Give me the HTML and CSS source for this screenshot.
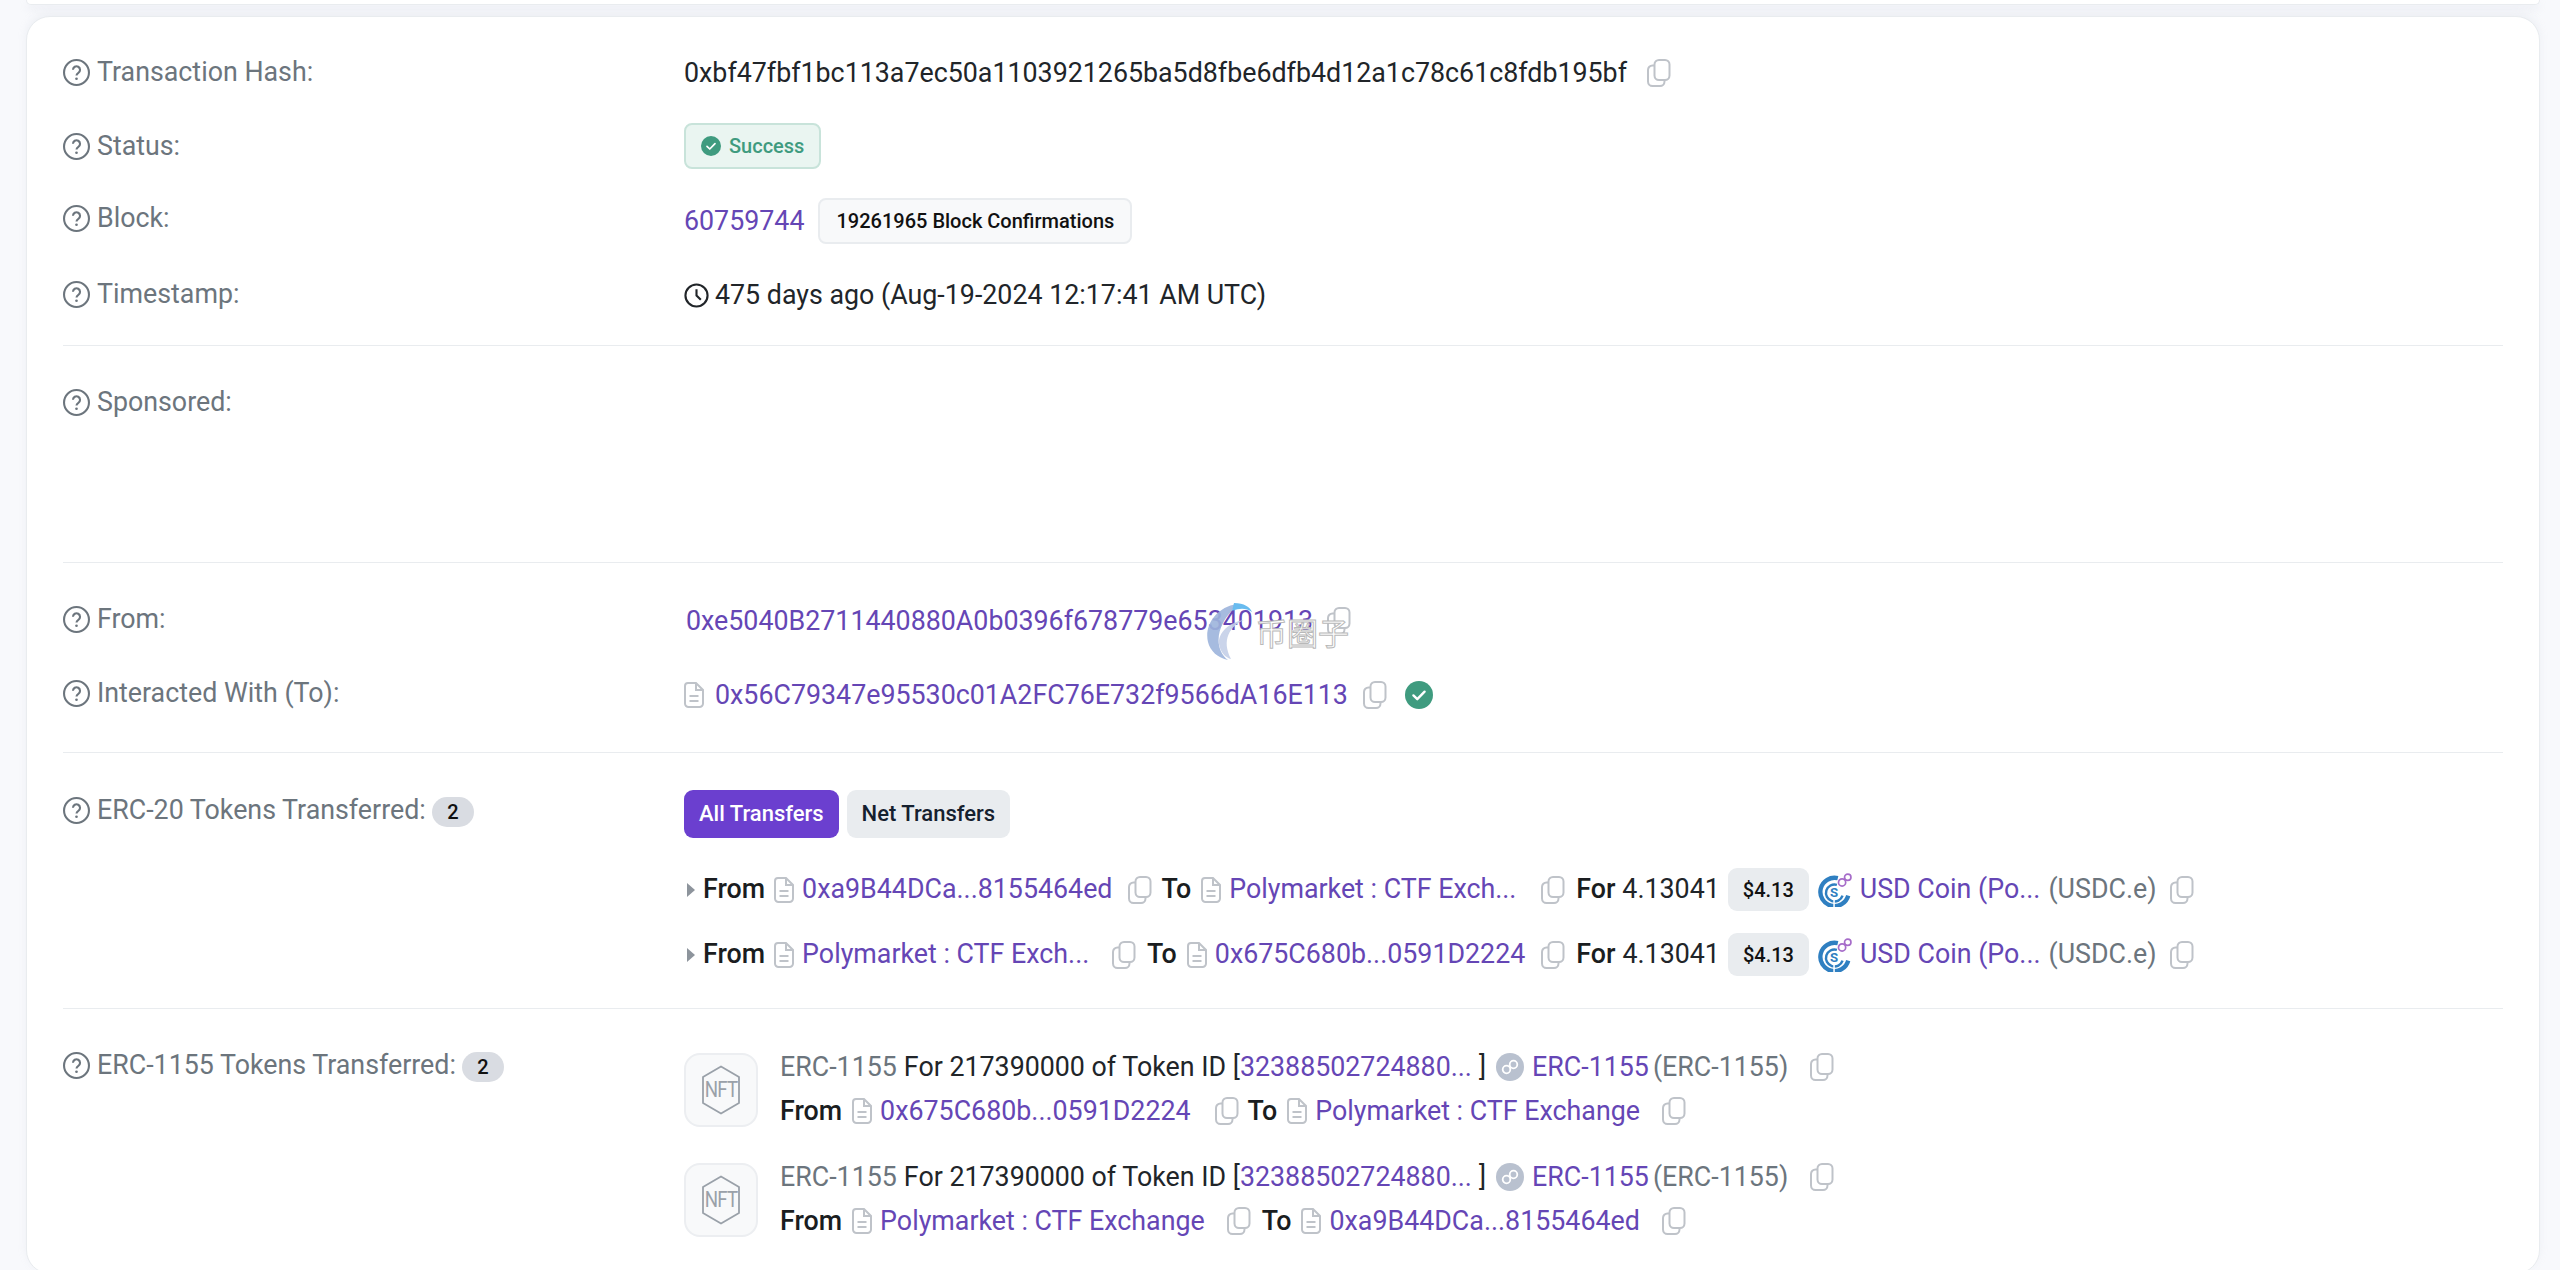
FILE: index.html
```html
<!DOCTYPE html>
<html lang="en">
<head>
  <meta charset="utf-8">
  <title>Transaction Details</title>
  <link rel="stylesheet" href="styles.css">
</head>
<body>
  <svg class="sprite" width="0" height="0">
    <symbol id="help" viewBox="0 0 26 26"><circle cx="13" cy="13" r="12" fill="none" stroke="currentColor" stroke-width="2"/><path d="M9.600 10.400a3.400 3.400 0 1 1 5.200 2.900c-1.100.7-1.800 1.300-1.800 2.600" fill="none" stroke="currentColor" stroke-width="2"/><circle cx="13" cy="19" r="1.300" fill="currentColor"/></symbol>
    <symbol id="copy" viewBox="0 0 24 28"><rect x="7.500" y="1" width="15" height="20" rx="4.500" fill="#fff" stroke="currentColor" stroke-width="2"/><path d="M7 6.500H5.500A4.500 4.500 0 0 0 1 11v11.500A4.500 4.500 0 0 0 5.500 27H13a4.500 4.500 0 0 0 4.500-4.500V21" fill="none" stroke="currentColor" stroke-width="2"/></symbol>
    <symbol id="file" viewBox="0 0 20 26"><path d="M4 1h8l7 7v13.500A3.500 3.500 0 0 1 15.500 25h-11A3.500 3.500 0 0 1 1 21.500V4a3 3 0 0 1 3-3z" fill="none" stroke="currentColor" stroke-width="2"/><path d="M12 1v7h7M5.500 14h9M5.500 19h9" fill="none" stroke="currentColor" stroke-width="2"/></symbol>
    <symbol id="check" viewBox="0 0 26 26"><circle cx="13" cy="13" r="13" fill="#3f9b7f"/><path d="M7.800 13.400l3.600 3.500 6.800-7" fill="none" stroke="#fff" stroke-width="2.200" stroke-linecap="round" stroke-linejoin="round"/></symbol>
    <symbol id="clock" viewBox="0 0 26 26"><circle cx="13" cy="13" r="11.500" fill="none" stroke="currentColor" stroke-width="2.200"/><path d="M13 6.500V13l4.500 4.500" fill="none" stroke="currentColor" stroke-width="2.200"/></symbol>
    <symbol id="usdc" viewBox="0 0 36 36">
      <path d="M21 5.500A15 15 0 1 0 32 24" fill="none" stroke="#2f7fc1" stroke-width="4.600"/>
      <path d="M20 12.500a9 9 0 1 0 6 11.500" fill="none" stroke="#2f7fc1" stroke-width="2.600"/>
      <text x="17" y="25" text-anchor="middle" font-family="Roboto, sans-serif" font-size="14" font-weight="700" fill="#2f7fc1">S</text>
      <path d="M17 36v-8" stroke="#fff" stroke-width="1.600"/>
      <circle cx="25.500" cy="10" r="3.800" fill="none" stroke="#a66cc9" stroke-width="1.800"/>
      <circle cx="31.500" cy="4.500" r="3.400" fill="none" stroke="#a66cc9" stroke-width="1.800"/>
    </symbol>
    <symbol id="chain" viewBox="0 0 28 28"><circle cx="14" cy="14" r="14" fill="#b9c1cf"/><circle cx="10.500" cy="16.500" r="3.800" fill="none" stroke="#fff" stroke-width="1.800"/><circle cx="17.500" cy="11.500" r="3.800" fill="none" stroke="#fff" stroke-width="1.800"/></symbol>
    <symbol id="nft" viewBox="0 0 40 50"><path d="M20 1.500L38 12v26L20 48.500 2 38V12z" fill="none" stroke="currentColor" stroke-width="1.800" stroke-linejoin="round"/></symbol>
  </svg>

  <div class="top-card"></div>

  <main class="card">
    <section class="block block-overview">
      <div class="row">
        <div class="label"><svg class="ico-help"><use href="#help"/></svg>Transaction Hash:</div>
        <div class="value">0xbf47fbf1bc113a7ec50a1103921265ba5d8fbe6dfb4d12a1c78c61c8fdb195bf<svg class="ico-copy copy-hash"><use href="#copy"/></svg></div>
      </div>
      <div class="row">
        <div class="label"><svg class="ico-help"><use href="#help"/></svg>Status:</div>
        <div class="value"><span class="status"><svg class="ico-status"><use href="#check"/></svg>Success</span></div>
      </div>
      <div class="row">
        <div class="label label-block"><svg class="ico-help"><use href="#help"/></svg>Block:</div>
        <div class="value"><a class="link">60759744</a><span class="confirm">19261965 Block Confirmations</span></div>
      </div>
      <div class="row">
        <div class="label"><svg class="ico-help"><use href="#help"/></svg>Timestamp:</div>
        <div class="value"><svg class="ico-clock"><use href="#clock"/></svg>475 days ago (Aug-19-2024 12:17:41 AM UTC)</div>
      </div>
    </section>

    <section class="block block-sponsored">
      <div class="label"><svg class="ico-help"><use href="#help"/></svg>Sponsored:</div>
    </section>

    <section class="block block-parties">
      <div class="row">
        <div class="label"><svg class="ico-help"><use href="#help"/></svg>From:</div>
        <div class="value value-from"><a class="link">0xe5040B2711440880A0b0396f678779e653401913</a><svg class="ico-copy copy-from"><use href="#copy"/></svg></div>
      </div>
      <div class="row">
        <div class="label"><svg class="ico-help"><use href="#help"/></svg>Interacted With (To):</div>
        <div class="value"><svg class="ico-file file-to"><use href="#file"/></svg><a class="link">0x56C79347e95530c01A2FC76E732f9566dA16E113</a><svg class="ico-copy copy-to"><use href="#copy"/></svg><svg class="ico-verified"><use href="#check"/></svg></div>
      </div>
      <div class="watermark">
        <svg class="watermark-logo" viewBox="0 0 50 60"><path d="M33 2C12 5 0 24 4 40c2 9 10 16 20 18C13 50 12 34 19 21 23 13 30 7 33 2z" fill="#9db4dc"/><path d="M30 1c10 0 16 4 18 9-6-4-12-4-20-1z" fill="#58b4ee"/><path d="M40 18C26 24 17 38 27 57c-5-1-11-7-12-15C14 30 26 20 40 18z" fill="#c5d0e8"/></svg>
        <span class="watermark-text">币圈子</span>
      </div>
    </section>

    <section class="block block-erc20">
      <div class="label label-top"><svg class="ico-help"><use href="#help"/></svg>ERC-20 Tokens Transferred:<span class="count">2</span></div>
      <div class="transfers">
        <div class="tabs">
          <span class="tab tab-active">All Transfers</span>
          <span class="tab">Net Transfers</span>
        </div>
        <div class="transfer">
          <span class="caret"></span><b class="from">From</b>
          <svg class="ico-file"><use href="#file"/></svg><a class="link">0xa9B44DCa...8155464ed</a><svg class="ico-copy gap-a"><use href="#copy"/></svg>
          <b class="to to-first">To</b>
          <svg class="ico-file"><use href="#file"/></svg><a class="link link-trunc1">Polymarket : CTF Exch...</a><svg class="ico-copy"><use href="#copy"/></svg>
          <b class="for">For</b><span class="amount">4.13041</span><span class="price">$4.13</span>
          <svg class="ico-usdc"><use href="#usdc"/></svg><a class="link">USD Coin (Po...</a><span class="muted sym">(USDC.e)</span><svg class="ico-copy gap-end"><use href="#copy"/></svg>
        </div>
        <div class="transfer">
          <span class="caret"></span><b class="from">From</b>
          <svg class="ico-file"><use href="#file"/></svg><a class="link link-trunc2">Polymarket : CTF Exch...</a><svg class="ico-copy"><use href="#copy"/></svg>
          <b class="to">To</b>
          <svg class="ico-file"><use href="#file"/></svg><a class="link">0x675C680b...0591D2224</a><svg class="ico-copy gap-a"><use href="#copy"/></svg>
          <b class="for">For</b><span class="amount">4.13041</span><span class="price">$4.13</span>
          <svg class="ico-usdc"><use href="#usdc"/></svg><a class="link">USD Coin (Po...</a><span class="muted sym">(USDC.e)</span><svg class="ico-copy gap-end"><use href="#copy"/></svg>
        </div>
      </div>
    </section>

    <section class="block block-erc1155">
      <div class="label label-top label-nft"><svg class="ico-help"><use href="#help"/></svg>ERC-1155 Tokens Transferred:<span class="count">2</span></div>
      <div class="nfts">
        <div class="nft">
          <div class="nft-thumb"><svg class="nft-hex"><use href="#nft"/></svg><span class="nft-word">NFT</span></div>
          <div class="nft-lines">
            <div class="nft-line"><span class="muted">ERC-1155</span><span class="gap-s">For 217390000 of Token ID [</span><a class="link">32388502724880...</a><span class="gap-s">]</span><svg class="ico-chain"><use href="#chain"/></svg><a class="link">ERC-1155</a><span class="muted sym-nft">(ERC-1155)</span><svg class="ico-copy"><use href="#copy"/></svg></div>
            <div class="nft-line"><b class="from-nft">From</b><svg class="ico-file"><use href="#file"/></svg><a class="link">0x675C680b...0591D2224</a><svg class="ico-copy copy-wide"><use href="#copy"/></svg><b class="to to-close">To</b><svg class="ico-file"><use href="#file"/></svg><a class="link">Polymarket : CTF Exchange</a><svg class="ico-copy"><use href="#copy"/></svg></div>
          </div>
        </div>
        <div class="nft">
          <div class="nft-thumb"><svg class="nft-hex"><use href="#nft"/></svg><span class="nft-word">NFT</span></div>
          <div class="nft-lines">
            <div class="nft-line"><span class="muted">ERC-1155</span><span class="gap-s">For 217390000 of Token ID [</span><a class="link">32388502724880...</a><span class="gap-s">]</span><svg class="ico-chain"><use href="#chain"/></svg><a class="link">ERC-1155</a><span class="muted sym-nft">(ERC-1155)</span><svg class="ico-copy"><use href="#copy"/></svg></div>
            <div class="nft-line"><b class="from-nft">From</b><svg class="ico-file"><use href="#file"/></svg><a class="link">Polymarket : CTF Exchange</a><svg class="ico-copy"><use href="#copy"/></svg><b class="to">To</b><svg class="ico-file"><use href="#file"/></svg><a class="link">0xa9B44DCa...8155464ed</a><svg class="ico-copy"><use href="#copy"/></svg></div>
          </div>
        </div>
      </div>
    </section>
  </main>
</body>
</html>
```

FILE: styles.css
```css
html, body {
  height: 100%;
  overflow: hidden;
}
body {
  font-family: Roboto, "Liberation Sans", sans-serif;
  font-size: 26.8px;
  color: #212529;
  background-color: #f8f9fc;
  margin: 0;
  padding: 0 20px 0 26px;
  line-height: 1.2;
}
.sprite {
  display: none;
}
.top-card {
  height: 4px;
  background-color: #fff;
  border: 1px solid #e9ecef;
  border-top: 0;
  border-radius: 0 0 20px 20px;
  margin-bottom: 11px;
  box-shadow: 0 4px 8px rgba(180, 185, 200, 0.2);
}
.card {
  background-color: #fff;
  border: 1px solid #e9ecef;
  border-radius: 24px;
  padding: 0 36px;
  box-shadow: 0 -3px 8px rgba(180, 185, 200, 0.15);
}
.block {
  border-bottom: 1px solid #e9ecef;
}
.block:last-child {
  border-bottom: 0;
}
.block-overview {
  padding: 19px 0 13px;
}
.block-overview .label {
  margin-bottom: 1px;
}
.block-overview .label-block {
  margin-bottom: 5px;
}
.block-sponsored {
  height: 217px;
  box-sizing: border-box;
  padding-top: 40px;
}
.block-parties {
  position: relative;
  padding: 21px 0 20px;
}
.block-erc20 {
  display: flex;
  padding: 37px 0 21px;
}
.block-erc1155 {
  display: flex;
  padding: 44px 0 0;
}
.row {
  display: flex;
  align-items: center;
  height: 74px;
}
.label {
  display: flex;
  align-items: center;
  flex: 0 0 621px;
  color: #6c757d;
  margin-bottom: 3px;
}
.label-top {
  align-self: flex-start;
  margin-bottom: 0;
  height: 40px;
}
.label-nft {
  margin-top: -8px;
}
.value {
  display: flex;
  align-items: center;
  white-space: nowrap;
}
.value-from {
  padding-left: 2px;
}
.link {
  color: #6546b5;
}
.muted {
  color: #6c757d;
}
.ico-help {
  width: 27px;
  height: 27px;
  color: #6c757d;
  margin-right: 7px;
}
.ico-copy {
  flex: none;
  width: 24px;
  height: 28px;
  color: #bfc3c9;
  margin-left: 22px;
}
.copy-hash {
  margin-left: 20px;
}
.copy-from {
  margin-left: 14px;
}
.copy-to {
  margin-left: 15px;
}
.copy-wide {
  margin-left: 24px;
}
.gap-a {
  margin-left: 16px;
}
.gap-end {
  margin-left: 13px;
}
.ico-file {
  flex: none;
  width: 20px;
  height: 26px;
  color: #bfc3c9;
  margin-right: 8px;
}
.file-to {
  margin-right: 11px;
}
.ico-verified {
  width: 28px;
  height: 28px;
  margin-left: 18px;
}
.ico-clock {
  width: 25px;
  height: 25px;
  margin-right: 6px;
}
.status {
  display: flex;
  align-items: center;
  height: 46px;
  box-sizing: border-box;
  padding: 0 15px;
  margin-top: -2px;
  font-size: 20px;
  font-weight: 500;
  color: #3f9b7f;
  background-color: #eaf5f1;
  border: 2px solid #c8e3da;
  border-radius: 8px;
}
.ico-status {
  width: 20px;
  height: 20px;
  margin-right: 8px;
}
.confirm {
  display: flex;
  align-items: center;
  height: 46px;
  box-sizing: border-box;
  padding: 0 16px;
  margin-left: 14px;
  font-size: 20px;
  font-weight: 500;
  color: #111;
  background-color: #f8f9fa;
  border: 2px solid #e9ecef;
  border-radius: 8px;
}
.count {
  display: inline-flex;
  align-items: center;
  justify-content: center;
  width: 42px;
  height: 30px;
  margin-left: 6px;
  margin-top: 4px;
  font-size: 20px;
  font-weight: 500;
  color: #111;
  background-color: #d9dce2;
  border-radius: 15px;
}
.tabs {
  display: flex;
  gap: 8px;
  margin-bottom: 19px;
}
.tab {
  display: flex;
  align-items: center;
  height: 48px;
  padding: 0 15px;
  font-size: 22px;
  font-weight: 500;
  color: #15202e;
  background-color: #e9ecef;
  border-radius: 9px;
}
.tab-active {
  color: #fff;
  background-color: #6b3fcf;
}
.transfer {
  display: flex;
  align-items: center;
  height: 65px;
  white-space: nowrap;
}
.caret {
  width: 0;
  height: 0;
  margin: 0 8px 0 3px;
  border-left: 8px solid #8d949c;
  border-top: 7px solid transparent;
  border-bottom: 7px solid transparent;
}
b {
  font-weight: 500;
  color: #1a1d20;
}
.from {
  margin-right: 9px;
}
.to {
  margin: 0 10px 0 11px;
}
.to-first {
  margin-left: 9px;
}
.to-close {
  margin-left: 9px;
}
.for {
  margin: 0 7px 0 11px;
}
.link-trunc1 {
  width: 290px;
}
.link-trunc2 {
  width: 288px;
}
.price {
  display: flex;
  align-items: center;
  height: 43px;
  padding: 0 15px;
  margin: 0 9px 0 8px;
  font-size: 20px;
  font-weight: 500;
  color: #111;
  background-color: #e9ecef;
  border-radius: 9px;
}
.ico-usdc {
  flex: none;
  width: 34px;
  height: 34px;
  margin-right: 8px;
}
.sym {
  margin-left: 8px;
}
.nft {
  display: flex;
  height: 74px;
  margin-bottom: 36px;
}
.nft-thumb {
  position: relative;
  display: flex;
  align-items: center;
  justify-content: center;
  flex: none;
  width: 74px;
  height: 74px;
  box-sizing: border-box;
  background-color: #f8f9fa;
  border: 2px solid #eceef1;
  border-radius: 16px;
  margin-right: 22px;
  color: #9aa1a9;
}
.nft-hex {
  width: 40px;
  height: 50px;
}
.nft-word {
  position: absolute;
  font-size: 22px;
  letter-spacing: -1px;
  transform: scaleX(0.85);
}
.nft-lines {
  margin-top: -8px;
}
.nft-line {
  display: flex;
  align-items: center;
  height: 44px;
  white-space: nowrap;
}
.gap-s {
  margin-left: 7px;
}
.ico-chain {
  width: 28px;
  height: 28px;
  margin: 0 8px 0 10px;
}
.sym-nft {
  margin-left: 4px;
}
.from-nft {
  margin-right: 10px;
}
.watermark {
  position: absolute;
  left: 1141px;
  top: 39px;
  display: flex;
  align-items: center;
}
.watermark-logo {
  width: 50px;
  height: 60px;
  opacity: 0.9;
}
.watermark-text {
  margin-left: 2px;
  font-family: "Noto Sans CJK SC", sans-serif;
  font-size: 31px;
  color: #fff;
  -webkit-text-stroke: 1px #b9b9b9;
}
```
